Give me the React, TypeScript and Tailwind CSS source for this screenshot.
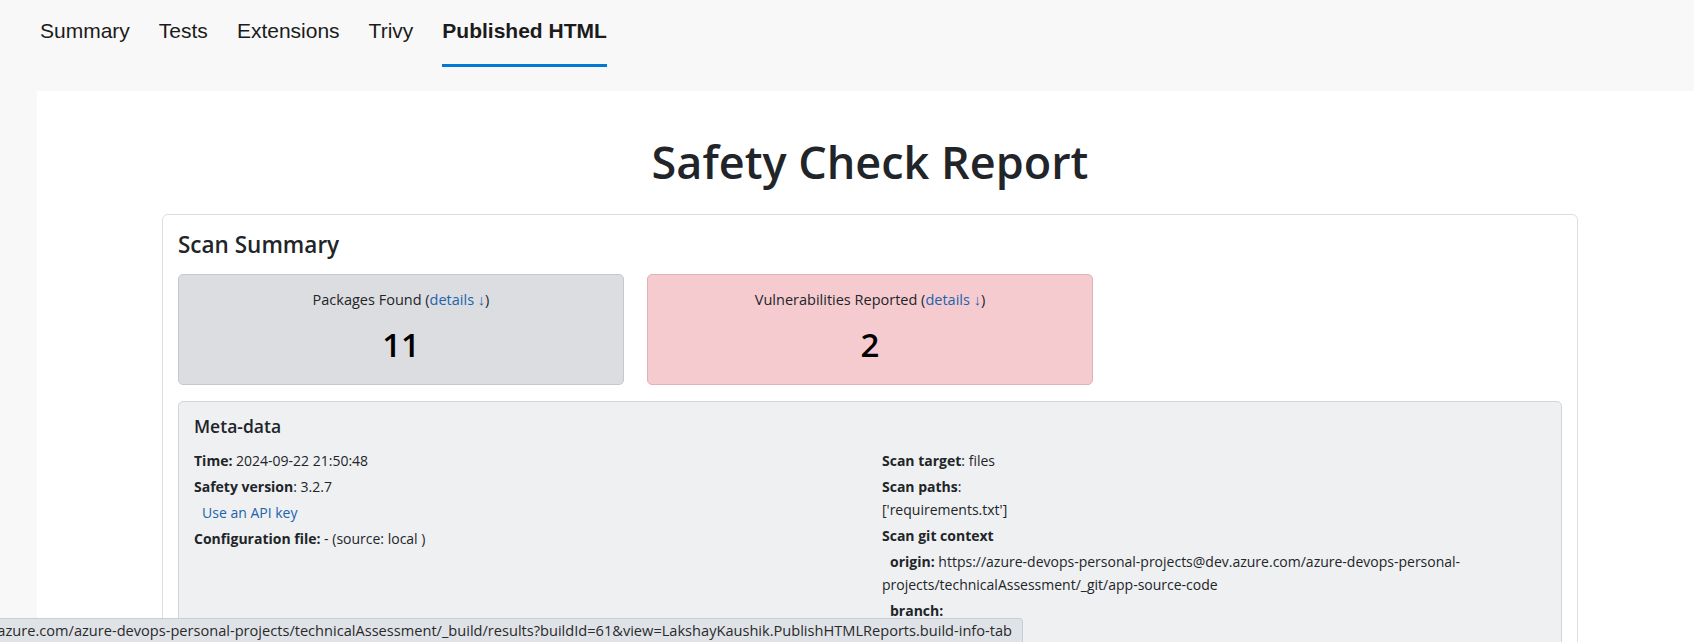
import React from 'react';

type Tab = { id: string; label: string };

const tabs: Tab[] = [
  { id: 'summary', label: 'Summary' },
  { id: 'tests', label: 'Tests' },
  { id: 'extensions', label: 'Extensions' },
  { id: 'trivy', label: 'Trivy' },
  { id: 'html', label: 'Published HTML' },
];

const statusUrl =
  'https://dev.azure.com/azure-devops-personal-projects/technicalAssessment/_build/results?buildId=61&view=LakshayKaushik.PublishHTMLReports.build-info-tab';

function StatCard({ label, value, tone }: { label: string; value: string; tone: 'gray' | 'red' }) {
  const toneClass =
    tone === 'gray'
      ? 'bg-[#dcdde0] border-[#c6c8cb]'
      : 'bg-[#f6cbd0] border-[#deb3b8]';
  return (
    <div className={`w-[446px] h-[111px] rounded-[5px] border ${toneClass} pt-[14px] text-center`}>
      <p className="text-[14.5px] leading-[1.5] text-[#212529]">
        {label} (<a className="text-[#1a64ad]">details ↓</a>)
      </p>
      <p className="mt-[14px] text-[33px] leading-[1.2] font-semibold text-black">{value}</p>
    </div>
  );
}

export default function App() {
  const active = 'html';

  return (
    <div className="relative flex flex-col h-[642px] w-[1694px] overflow-hidden bg-[#f8f8f8]">
      {/* pipeline tabs */}
      <nav className="flex gap-[29px] pl-[40px] font-['Liberation_Sans',Arial,sans-serif] text-[21px] leading-[24px] text-[#1b1b1b]">
        {tabs.map((tab) => (
          <div
            key={tab.id}
            className={
              tab.id === active
                ? 'h-[67px] pt-[19px] font-bold border-b-[3px] border-[#0078d4]'
                : 'h-[67px] pt-[19px]'
            }
          >
            {tab.label}
          </div>
        ))}
      </nav>

      {/* report frame */}
      <div className="flex-1 ml-[37px] mt-[24px] bg-white overflow-hidden font-['Open_Sans',sans-serif] text-[#212529]">
        <div className="ml-[125px] w-[1416px]">
          <h1 className="pt-[44px] text-center text-[45px] leading-[1.2] font-semibold">Safety Check Report</h1>

          <div className="mt-[25px] rounded-[6px] border border-[#dcdfe2] px-[15px] pt-4">
            <h2 className="mb-4 text-[22.5px] leading-[1.2] font-semibold">Scan Summary</h2>

            <div className="flex gap-[23px]">
              <StatCard label="Packages Found" value="11" tone="gray" />
              <StatCard label="Vulnerabilities Reported" value="2" tone="red" />
            </div>

            <div className="mt-4 h-[300px] rounded-[5px] border border-[#d3d6d9] bg-[#eff0f2] px-[15px] pt-[14px]">
              <h3 className="mb-3 text-[17.5px] leading-[1.2] font-semibold">Meta-data</h3>

              <div className="grid grid-cols-2 gap-x-6 text-[14px] leading-[23px]">
                <div className="flex flex-col gap-[3px]">
                  <p>
                    <b>Time:</b> 2024-09-22 21:50:48
                  </p>
                  <p>
                    <b>Safety version</b>: 3.2.7
                  </p>
                  <p className="pl-2">
                    <a className="text-[#1a64ad]">Use an API key</a>
                  </p>
                  <p>
                    <b>Configuration file:</b> - (source: local )
                  </p>
                </div>

                <div className="flex flex-col gap-[3px]">
                  <p>
                    <b>Scan target</b>: files
                  </p>
                  <div>
                    <p>
                      <b>Scan paths</b>:
                    </p>
                    <p>['requirements.txt']</p>
                  </div>
                  <p>
                    <b>Scan git context</b>
                  </p>
                  <p className="indent-2">
                    <b>origin:</b> https://azure-devops-personal-projects@dev.azure.com/azure-devops-personal-projects/technicalAssessment/_git/app-source-code
                  </p>
                  <p className="indent-2">
                    <b>branch:</b>
                  </p>
                </div>
              </div>
            </div>
          </div>
        </div>
      </div>

      {/* link hover status bar */}
      <div className="absolute bottom-0 left-0 flex h-[24px] w-[1023px] items-center justify-end overflow-hidden whitespace-nowrap rounded-tr-[4px] border-t border-r border-[#c9ced3] bg-[#dfe3e7] pr-[10px] pt-px font-['Open_Sans',sans-serif] text-[14.6px] text-[#2a2a2a]">
        <span>{statusUrl}</span>
      </div>
    </div>
  );
}
